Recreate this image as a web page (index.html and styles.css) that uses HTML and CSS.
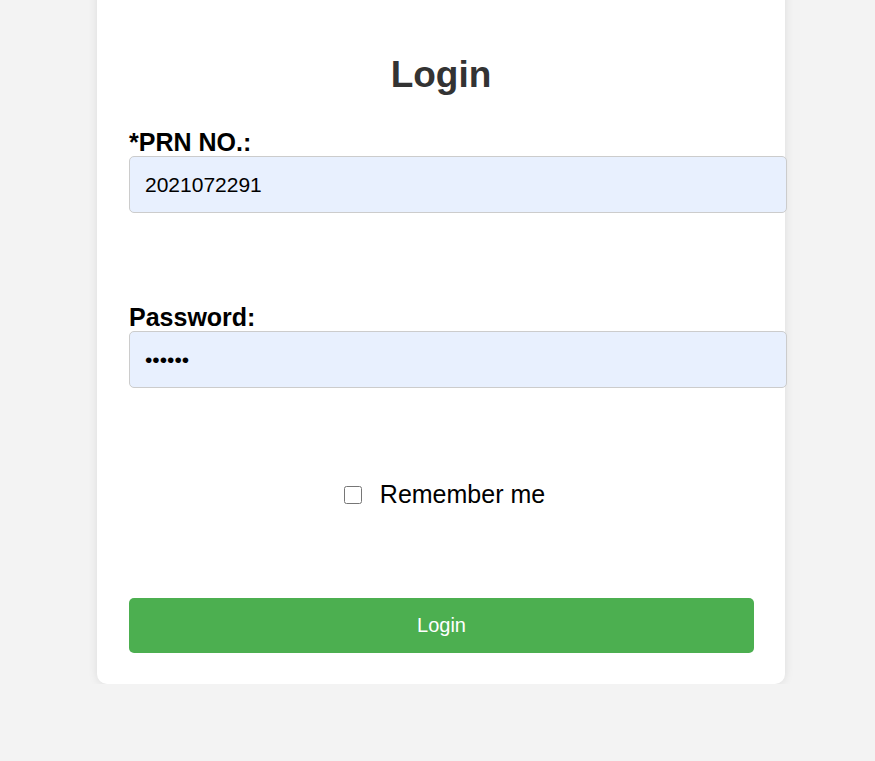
FILE: index.html
```html
<!DOCTYPE html>
<html>
<head>
<meta charset="utf-8">
<link rel="stylesheet" href="styles.css">
<title>Login</title>
</head>
<body>
<div class="page">
  <form class="card">
    <h2 class="title">Login</h2>
    <div class="group">
      <label class="label" for="prn">*PRN NO.:</label>
      <input class="field" id="prn" type="text" value="2021072291">
    </div>
    <div class="group group-last">
      <label class="label" for="pw">Password:</label>
      <input class="field" id="pw" type="password" value="123456">
    </div>
    <div class="remember">
      <input class="check" type="checkbox" id="rem">
      <label class="remember-text" for="rem">Remember me</label>
    </div>
    <button class="btn" type="button">Login</button>
  </form>
</div>
</body>
</html>
```
FILE: styles.css
```css
html, body {
  margin: 0;
  padding: 0;
  background: #f3f3f3;
  font-family: "Liberation Sans", Arial, sans-serif;
}
.page {
  padding-left: 97px;
}
.card {
  width: 624px;
  margin-top: -20px;
  padding: 74px 32px 31px;
  background: #fff;
  border-radius: 10px;
  box-shadow: 0 0 10px rgba(0, 0, 0, 0.1);
}
.title {
  margin: 0 0 32px;
  text-align: center;
  font-size: 37px;
  font-weight: bold;
  color: #333;
}
.group {
  margin-bottom: 90px;
}
.group-last {
  margin-bottom: 92px;
}
.label {
  display: block;
  font-size: 25px;
  line-height: 28px;
  font-weight: bold;
  color: #000;
}
.field {
  display: block;
  width: 100%;
  margin: 0;
  padding: 0 17px 0 15px;
  box-sizing: content-box;
  height: 55px;
  font-family: "Liberation Sans", Arial, sans-serif;
  font-size: 21px;
  color: #000;
  background: #e8f0fe;
  border: 1px solid #ccc;
  border-radius: 5px;
  outline: none;
}
.remember {
  display: flex;
  align-items: center;
  justify-content: center;
  margin-bottom: 89px;
  padding-left: 7px;
}
.check {
  width: 18px;
  height: 18px;
  margin: 0;
}
.remember-text {
  margin-left: 18px;
  font-size: 25px;
  line-height: 29px;
  color: #000;
}
.btn {
  display: block;
  width: 625px;
  height: 55px;
  border: none;
  border-radius: 5px;
  background: #4caf50;
  color: #fff;
  font-family: "Liberation Sans", Arial, sans-serif;
  font-size: 20px;
}
```
